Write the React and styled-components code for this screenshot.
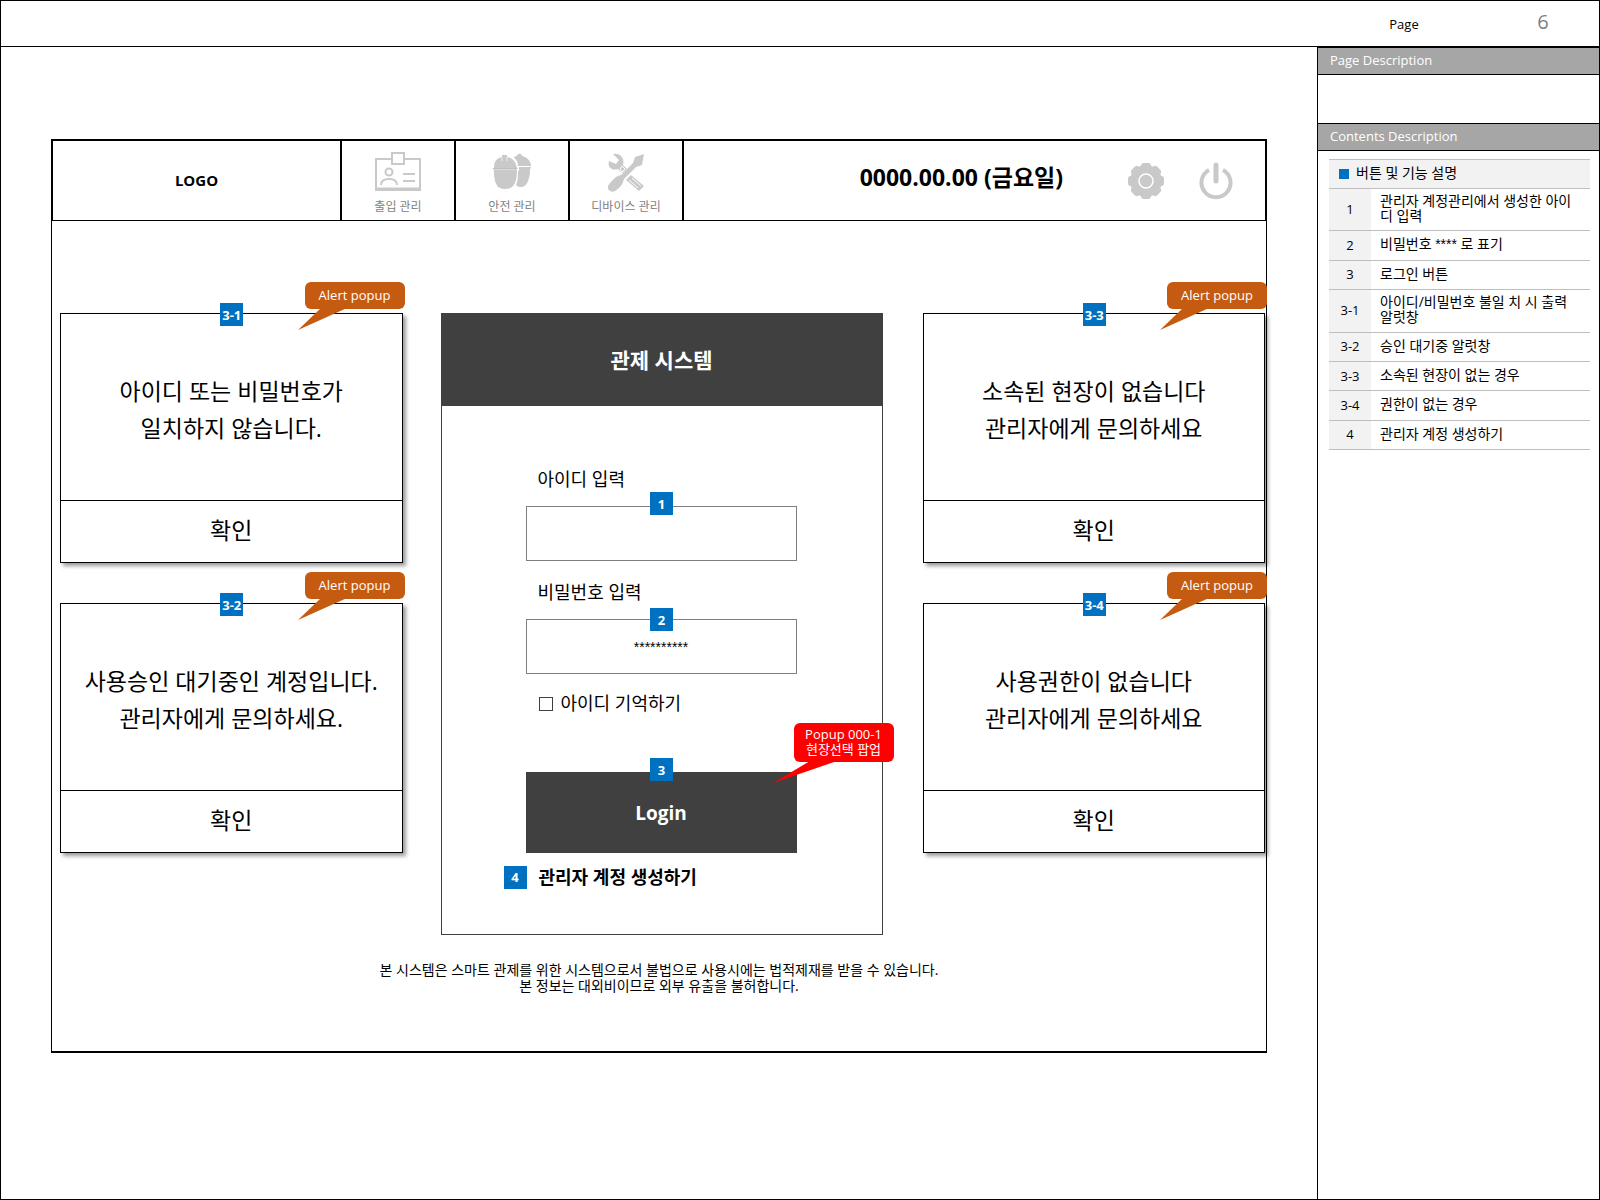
import React from 'react'
import styled, { createGlobalStyle } from 'styled-components'

const Stars = styled.span`
font-family: 'Liberation Sans', sans-serif;
`

const leftAlerts = [
  { no: '3-1', lines: ['아이디 또는 비밀번호가', '일치하지 않습니다.'] },
  { no: '3-2', lines: ['사용승인 대기중인 계정입니다.', '관리자에게 문의하세요.'] },
]

const rightAlerts = [
  { no: '3-3', lines: ['소속된 현장이 없습니다', '관리자에게 문의하세요'] },
  { no: '3-4', lines: ['사용권한이 없습니다', '관리자에게 문의하세요'] },
]

const descriptions = [
  { no: '1', text: '관리자 계정관리에서 생성한 아이디 입력' },
  { no: '2', text: <>비밀번호 <Stars>****</Stars> 로 표기</> },
  { no: '3', text: '로그인 버튼' },
  { no: '3-1', text: '아이디/비밀번호 불일 치 시 출력 알럿창' },
  { no: '3-2', text: '승인 대기중 알럿창' },
  { no: '3-3', text: '소속된 현장이 없는 경우' },
  { no: '3-4', text: '권한이 없는 경우' },
  { no: '4', text: '관리자 계정 생성하기' },
]

function IdCardIcon() {
  return (
    <svg width="46" height="40" viewBox="0 0 46 40" fill="none" stroke="#c9c9c9" strokeWidth="2">
      <path d="M17 7H1v31h44V7H29" />
      <path d="M1 37h44" strokeWidth="3" />
      <rect x="17" y="1" width="12" height="11" />
      <circle cx="14" cy="20" r="3.5" />
      <path d="M6 33c0-4 3-6 8-6s8 2 8 6" />
      <path d="M28 22h12M28 29h12" />
    </svg>
  )
}

function HelmetIcon() {
  return (
    <svg width="40" height="40" viewBox="0 0 40 40" fill="#c9c9c9">
      <path d="M22 6c1-2 2-2 3-2 0-3 5-3 5 0 5 1 9 5 9 10H26c0-4-2-7-4-8z" />
      <path d="M27 15h12v1l-1 1c0 10-3 18-9 18-3 0-4-1-5-2 2-4 2-9 2-14h1z" />
      <path d="M2 16C2 9 5 6 10 5V3h5v2c6 1 9 5 10 11l1 1H0z" />
      <path d="M2 18h23c0 12-3 19-12 19S2 30 2 18z" />
      <path d="M1 17h24" stroke="#b5b5b5" strokeWidth="1" />
      <path d="M10 5v4M15 5v4" stroke="#fff" strokeWidth="1" opacity="0.7" />
    </svg>
  )
}

function ToolsIcon() {
  return (
    <svg width="38" height="40" viewBox="0 0 38 40" fill="#c9c9c9">
      <path d="M6 2l6 6-3 4-7-3C0 16 6 19 11 17l4 4 5-4-4-4C18 6 13 1 6 2z" />
      <path d="M37 2l-9 3-2 6L14 23c-5 1-9 5-13 11-1 4 3 7 7 5 5-3 8-7 9-12l12-12 6-2z" />
      <path d="M19 28l5-5 13 11-5 5z" />
      <path d="M22 28l9 8M25 26l9 8" stroke="#fff" strokeWidth="1" />
      <path d="M13 17l2-3 3 3-3 3z" stroke="#fff" strokeWidth="1" />
    </svg>
  )
}

function GearIcon() {
  return (
    <svg width="38" height="38" viewBox="0 0 38 38" fill="#c9c9c9">
      <circle cx="19" cy="19" r="16" />
      {[0, 45, 90, 135, 180, 225, 270, 315].map((angle) => (
        <rect key={angle} x="14" y="1" width="10" height="10" rx="3" transform={`rotate(${angle} 19 19)`} />
      ))}
      <circle cx="19" cy="19" r="7" stroke="#fff" strokeWidth="1.500" />
    </svg>
  )
}

function PowerIcon() {
  return (
    <svg width="34" height="38" viewBox="0 0 34 38" fill="none" stroke="#c9c9c9">
      <path d="M10 8a14.500 14.500 0 1 0 14 0" strokeWidth="4" />
      <path d="M17 3v16" strokeWidth="5" strokeLinecap="round" />
    </svg>
  )
}

function AlertCard({ no, lines }) {
  return (
    <Card>
      <Badge>{no}</Badge>
      <AlertCallout>
        Alert popup
        <Tail width="52" height="22" viewBox="0 0 52 22">
          <path d="M23 0h26L0 22z" fill="#c55a11" />
        </Tail>
      </AlertCallout>
      <CardMessage>
        {lines.map((line) => (
          <span key={line}>{line}</span>
        ))}
      </CardMessage>
      <CardButton type="button">확인</CardButton>
    </Card>
  )
}

function LoginPanel() {
  return (
    <Login onSubmit={(e) => e.preventDefault()}>
      <LoginTitle>관제 시스템</LoginTitle>
      <LoginBody>
        <FieldLabel htmlFor="userId">아이디 입력</FieldLabel>
        <Anchor>
          <TextInput id="userId" type="text" />
          <Badge $top="-14px">1</Badge>
        </Anchor>
        <FieldLabel htmlFor="userPw">비밀번호 입력</FieldLabel>
        <Anchor>
          <TextInput id="userPw" type="text" defaultValue="**********" />
          <Badge>2</Badge>
        </Anchor>
        <Remember>
          <input type="checkbox" />
          아이디 기억하기
        </Remember>
        <Anchor>
          <LoginButton type="submit">Login</LoginButton>
          <Badge $top="-14px">3</Badge>
          <PopupCallout>
            Popup 000-1
            <br />
            현장선택 팝업
            <Tail width="66" height="22" viewBox="0 0 66 22">
              <path d="M37 0h27L0 22z" fill="#ff0000" />
            </Tail>
          </PopupCallout>
        </Anchor>
        <Create>
          <StaticBadge>4</StaticBadge>
          <a href="#create">관리자 계정 생성하기</a>
        </Create>
      </LoginBody>
    </Login>
  )
}

function App() {
  return (
    <Page>
      <GlobalStyle />
      <TopBar>
        <PageLabel>Page</PageLabel>
        <PageNo>6</PageNo>
      </TopBar>
      <Columns>
        <Main>
          <Frame>
            <Header>
              <Logo>LOGO</Logo>
              <MenuButton type="button"><IdCardIcon />출입 관리</MenuButton>
              <MenuButton type="button"><HelmetIcon />안전 관리</MenuButton>
              <MenuButton type="button"><ToolsIcon />디바이스 관리</MenuButton>
              <HeaderRight>
                <DateText>0000.00.00 (금요일)</DateText>
                <IconButton type="button" aria-label="설정"><GearIcon /></IconButton>
                <IconButton type="button" aria-label="종료"><PowerIcon /></IconButton>
              </HeaderRight>
            </Header>
            <Board>
              <CardColumn>
                {leftAlerts.map((a) => <AlertCard key={a.no} {...a} />)}
              </CardColumn>
              <LoginPanel />
              <CardColumn>
                {rightAlerts.map((a) => <AlertCard key={a.no} {...a} />)}
              </CardColumn>
            </Board>
            <Notice>
              본 시스템은 스마트 관제를 위한 시스템으로서 불법으로 사용시에는 법적제재를 받을 수 있습니다.
              <br />
              본 정보는 대외비이므로 외부 유출을 불허합니다.
            </Notice>
          </Frame>
        </Main>
        <Side>
          <SideTitle>Page Description</SideTitle>
          <SideBlank />
          <SideTitle>Contents Description</SideTitle>
          <DescTable>
            <thead>
              <tr>
                <th colSpan="2"><Square />버튼 및 기능 설명</th>
              </tr>
            </thead>
            <tbody>
              {descriptions.map((d) => (
                <tr key={d.no}>
                  <NoCell>{d.no}</NoCell>
                  <TextCell>{d.text}</TextCell>
                </tr>
              ))}
            </tbody>
          </DescTable>
        </Side>
      </Columns>
    </Page>
  )
}

export default App

const GlobalStyle = createGlobalStyle`
* {
  box-sizing: border-box;
}
body {
  margin: 0;
  background: #fff;
  color: #000;
}
body, button, input {
  font-family: 'Open Sans', 'Noto Sans CJK KR', sans-serif;
}
button {
  padding: 0;
  border: 0;
  background: none;
  color: inherit;
  cursor: pointer;
}
svg {
  display: block;
}
`

const Page = styled.div`
display: flex;
flex-direction: column;
min-height: 100vh;
border: 1px solid #000;
`

const TopBar = styled.header`
display: flex;
justify-content: flex-end;
align-items: center;
height: 46px;
border-bottom: 1px solid #000;
`

const PageLabel = styled.span`
width: 110px;
text-align: center;
font-size: 13px;
`

const PageNo = styled.span`
width: 112px;
margin-left: 28px;
text-align: center;
font-size: 20px;
line-height: 24px;
padding-bottom: 4px;
color: #7f7f7f;
`

const Columns = styled.div`
display: flex;
flex: 1;
`

const Main = styled.main`
flex: 1;
padding: 92px 50px 0;
`

const Frame = styled.section`
border: solid #000;
border-width: 2px 1px;
padding-bottom: 57px;
`

const Header = styled.header`
display: flex;
height: 80px;
border: solid #000;
border-width: 0 1px 1px;
`

const Logo = styled.div`
display: flex;
align-items: center;
justify-content: center;
width: 287px;
padding-bottom: 2px;
font-size: 15px;
font-weight: 700;
`

const MenuButton = styled.button`
display: flex;
flex-direction: column;
align-items: center;
gap: 6px;
width: 114px;
padding-top: 11px;
border-left: 2px solid #000;
font-size: 12px;
line-height: 18px;
color: #7f7f7f;
`

const HeaderRight = styled.div`
display: flex;
flex: 1;
align-items: center;
justify-content: flex-end;
gap: 34px;
padding-right: 32px;
border-left: 2px solid #000;
`

const DateText = styled.span`
margin-right: 30px;
font-size: 23px;
line-height: 32px;
font-weight: 700;
padding-bottom: 8px;
`

const IconButton = styled.button`
display: block;
`

const Board = styled.div`
display: grid;
grid-template-columns: 1fr 444px 1fr;
column-gap: 38px;
align-items: start;
padding: 92px 1px 0 8px;
`

const CardColumn = styled.div`
display: flex;
flex-direction: column;
gap: 40px;
`

const Card = styled.section`
position: relative;
border: 1px solid #000;
background: #fff;
box-shadow: 3px 3px 4px rgba(0, 0, 0, 0.4);
`

const CardMessage = styled.div`
display: flex;
flex-direction: column;
align-items: center;
justify-content: center;
height: 186px;
padding-top: 6px;
font-size: 23px;
line-height: 37px;
`

const CardButton = styled.button`
display: block;
width: 100%;
height: 62px;
padding-bottom: 6px;
border-top: 1px solid #000;
font-size: 23px;
`

const StaticBadge = styled.span`
display: flex;
align-items: center;
justify-content: center;
width: 23px;
height: 23px;
background: #0070c0;
color: #fff;
font-size: 13px;
line-height: 18px;
font-weight: 700;
white-space: nowrap;
`

const Badge = styled(StaticBadge)`
position: absolute;
top: ${(p) => p.$top || '-11px'};
left: calc(50% - 11px);
`

const Callout = styled.div`
position: absolute;
width: 100px;
border-radius: 6px;
color: #fff;
font-size: 13px;
text-align: center;
`

const AlertCallout = styled(Callout)`
top: -32px;
right: -3px;
line-height: 27px;
background: #c55a11;
`

const PopupCallout = styled(Callout)`
top: -49px;
right: -97px;
padding: 4px 0 5px;
line-height: 15px;
background: #ff0000;
`

const Tail = styled.svg`
position: absolute;
top: calc(100% - 1px);
right: 55px;
`

const Login = styled.form`
margin-right: 2px;
border: 1px solid #404040;
background: #fff;
`

const LoginTitle = styled.h1`
margin: 0;
background: #404040;
color: #fff;
font-size: 21px;
line-height: 92px;
font-weight: 700;
text-align: center;
`

const LoginBody = styled.div`
display: flex;
flex-direction: column;
padding: 42px 85px 45px 84px;
`

const FieldLabel = styled.label`
margin: 19px 0 15px 12px;
font-size: 18px;
line-height: 24px;
`

const Anchor = styled.div`
position: relative;
`

const TextInput = styled.input`
display: block;
width: 100%;
height: 55px;
padding: 0 12px;
border: 1px solid #7f7f7f;
border-radius: 0;
background: #fff;
font-family: 'Liberation Sans', 'Noto Sans CJK KR', sans-serif;
font-size: 14px;
text-align: center;
`

const Remember = styled.label`
display: flex;
align-items: center;
gap: 8px;
margin: 17px 0 57px 13px;
font-size: 18px;
line-height: 24px;

input {
  appearance: none;
  width: 14px;
  height: 14px;
  margin: 2px 0 0;
  border: 1px solid #404040;
}
`

const LoginButton = styled.button`
display: block;
width: 100%;
height: 81px;
background: #404040;
color: #fff;
font-size: 19px;
font-weight: 700;
`

const Create = styled.div`
display: flex;
align-items: center;
gap: 12px;
margin: 12px 0 0 -22px;
font-size: 18px;
line-height: 24px;
font-weight: 700;

a {
  color: #000;
  text-decoration: none;
}
`

const Notice = styled.p`
margin: 27px 0 0;
font-size: 14px;
line-height: 16px;
text-align: center;
`

const Side = styled.aside`
width: 282px;
border-left: 1px solid #000;
`

const SideTitle = styled.h2`
margin: 0;
padding: 0 12px 2px;
border: solid #000;
border-width: 1px 0;
background: #a6a6a6;
color: #fff;
font-size: 13px;
line-height: 24px;
font-weight: 400;
`

const SideBlank = styled.div`
height: 48px;
`

const DescTable = styled.table`
width: 261px;
height: 291px;
margin: 8px 0 0 11px;
border-collapse: collapse;
font-size: 14px;
line-height: 15px;

th, td {
  height: 29px;
  border: solid #bfbfbf;
  border-width: 1px 0;
}
th {
  padding: 0 10px 3px;
  background: #f2f2f2;
  font-weight: 400;
  text-align: left;
}
`

const NoCell = styled.td`
width: 42px;
padding: 0;
background: #f2f2f2;
font-size: 13px;
text-align: center;
`

const TextCell = styled.td`
padding: 4px 16px 7px 9px;
word-break: break-all;
`

const Square = styled.span`
display: inline-block;
width: 10px;
height: 10px;
margin-right: 7px;
background: #0070c0;
vertical-align: -1px;
`
